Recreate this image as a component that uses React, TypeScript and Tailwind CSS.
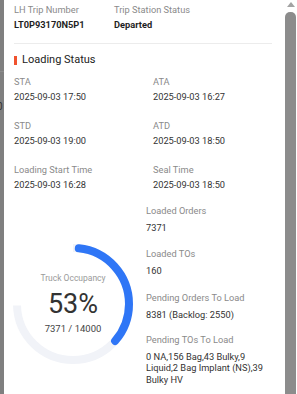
import React from "react";

const font = { fontFamily: "Roboto, 'Noto Sans', sans-serif" };

function Field({ label, value, bold }: { label: string; value: string; bold?: boolean }) {
  return (
    <div className="flex flex-col">
      <div className="text-[9.25px] leading-[14px] text-[#8a8a8a]">{label}</div>
      <div className={`mt-[1px] text-[9.25px] leading-[14px] ${bold ? "font-bold text-[#1f1f1f]" : "text-[#333333]"}`}>{value}</div>
    </div>
  );
}

function Stat({ label, value, className }: { label: string; value: string; className?: string }) {
  return (
    <div className={`flex flex-col ${className ?? ""}`}>
      <div className="text-[9.25px] leading-[14px] text-[#8a8a8a]">{label}</div>
      <div className="mt-[4px] text-[9.25px] leading-[11.5px] text-[#333333]">{value}</div>
    </div>
  );
}

function Gauge() {
  const r = 56;
  const c = 2 * Math.PI * r;
  const deg = (d: number) => (c * d) / 360;
  const track = deg(268);
  const start = deg(6);
  const len = deg(125);
  return (
    <div className="relative w-[122px] h-[122px]">
      <svg width="122" height="122" viewBox="0 0 122 122" className="absolute inset-0">
        <g transform="rotate(-90 61 61)">
          <circle cx="61" cy="61" r={r} fill="none" stroke="#f1f3f8" strokeWidth="8" strokeDasharray={`${track} ${c}`} />
          <circle cx="61" cy="61" r={r} fill="none" stroke="#2f76f6" strokeWidth="8" strokeLinecap="round" strokeDasharray={`${len} ${c}`} strokeDashoffset={-start} />
        </g>
      </svg>
      <div className="absolute inset-0 flex flex-col items-center pt-[29px]">
        <div className="text-[8.5px] leading-[12px] text-[#9a9a9a]">Truck Occupancy</div>
        <div className="mt-[6px] text-[27px] leading-[28px] text-[#333333]">53%</div>
        <div className="mt-[5px] text-[9.5px] leading-[12px] text-[#444444]">7371 / 14000</div>
      </div>
    </div>
  );
}

export default function App() {
  return (
    <div className="w-[297px] h-[394px] flex overflow-hidden bg-white" style={font}>
      <div className="w-[4px] h-full bg-[#7f7f7f] relative overflow-hidden shrink-0">
        <div className="absolute left-0 top-[71px] w-[4px] h-[1px] bg-[#8c8c8c]" />
        <div className="absolute left-0 top-[100px] w-[4px] h-[14px] text-[10px] leading-[14px] text-[#333]">
          <span className="relative -left-[3px]">0</span>
        </div>
      </div>
      <div className="flex-1 flex flex-col pl-[10px] pr-[12px] pt-[3px]">
        <div className="flex">
          <div className="w-[100px]"><Field label="LH Trip Number" value="LT0P93170N5P1" bold /></div>
          <Field label="Trip Station Status" value="Departed" bold />
        </div>
        <div className="mt-[11px] h-[1px] bg-[#ececec]" />
        <div className="mt-[8px] flex items-center h-[16px]">
          <div className="w-[3px] h-[9px] bg-[#f0522e] mr-[5px]" />
          <div className="text-[11px] leading-[16px] text-[#222222]">Loading Status</div>
        </div>
        <div className="mt-[7px] grid grid-cols-[139px_1fr] gap-y-[15px]">
          <Field label="STA" value="2025-09-03 17:50" />
          <Field label="ATA" value="2025-09-03 16:27" />
          <Field label="STD" value="2025-09-03 19:00" />
          <Field label="ATD" value="2025-09-03 18:50" />
          <Field label="Loading Start Time" value="2025-09-03 16:28" />
          <Field label="Seal Time" value="2025-09-03 18:50" />
        </div>
        <div className="mt-[12px] flex">
          <div className="w-[132px] shrink-0">
            <div className="mt-[39px] -ml-[2px]"><Gauge /></div>
          </div>
          <div className="w-[124px] flex flex-col">
            <Stat label="Loaded Orders" value="7371" />
            <Stat label="Loaded TOs" value="160" className="mt-[13px]" />
            <Stat label="Pending Orders To Load" value="8381 (Backlog: 2550)" className="mt-[15px]" />
            <Stat label="Pending TOs To Load" value="0 NA,156 Bag,43 Bulky,9 Liquid,2 Bag Implant (NS),39 Bulky HV" className="mt-[12px]" />
          </div>
        </div>
      </div>
      <div className="w-[13px] h-full shrink-0 bg-white flex flex-col items-center">
        <div className="mt-[2px] w-0 h-0 border-l-[4px] border-r-[4px] border-b-[5px] border-l-transparent border-r-transparent border-b-[#a3a3a3]" />
        <div className="mt-[5px] w-[11px] flex-1 bg-[#8c8c8c] rounded-t-[5px]" />
      </div>
    </div>
  );
}
